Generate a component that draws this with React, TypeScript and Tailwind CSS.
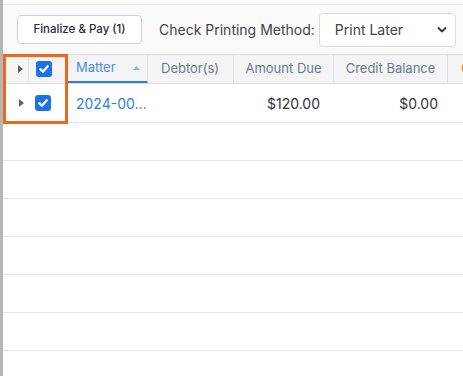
import React from "react";

const font = { fontFamily: "Inter, 'Noto Sans', sans-serif" };

function Check() {
  return (
    <div className="w-[16px] h-[16px] rounded-[3px] bg-[#1a73e8] flex items-center justify-center">
      <svg width="12" height="12" viewBox="0 0 12 12">
        <path d="M2.3 6.2 L4.9 8.7 L9.8 3.3" fill="none" stroke="white" strokeWidth="2.3" strokeLinecap="round" strokeLinejoin="round" />
      </svg>
    </div>
  );
}

function Tri() {
  return (
    <svg width="5" height="8" viewBox="0 0 5 8">
      <path d="M0 0 L5 4 L0 8 Z" fill="#5f6368" />
    </svg>
  );
}

export default function App() {
  const emptyRows = [0, 1, 2, 3, 4, 5, 6];
  return (
    <div className="w-[463px] h-[376px] flex overflow-hidden bg-white" style={font}>
      <div className="w-[3px] h-full bg-[#b5b5b5] shrink-0" />
      <div className="flex-1 flex flex-col relative min-w-0 overflow-hidden">
        <div className="h-[4px] bg-white shrink-0" />
        <div className="h-[50px] bg-[#fafafb] border-t border-[#e4e4e4] flex items-center pl-[14px] shrink-0">
          <button className="h-[29px] w-[125px] bg-white border border-[#cfd3dc] rounded-[4px] text-[11.5px] font-medium text-[#2a2840] flex items-center justify-center">
            Finalize &amp; Pay (1)
          </button>
          <span className="ml-[17px] text-[14px] text-[#444]">Check Printing Method:</span>
          <div className="ml-[4px] h-[34px] w-[137px] bg-white border border-[#dcdcdc] rounded-[4px] flex items-center justify-between pl-[15px] pr-[8px]">
            <span className="text-[14px] text-[#444]">Print Later</span>
            <svg width="10" height="7" viewBox="0 0 10 7">
              <path d="M1 1.5 L5 5.5 L9 1.5" fill="none" stroke="#333" strokeWidth="1.8" />
            </svg>
          </div>
        </div>
        {/* header */}
        <div className="h-[30px] flex bg-[#f4f4f5] border-t border-b border-[#dedede] shrink-0 text-[13px] text-[#6a7b92]">
          <div className="w-[26px] flex items-center justify-end pr-[5px] border-r border-[#e0e0e0]">
            <Tri />
          </div>
          <div className="w-[38px] flex items-center justify-start pl-[7px] border-r border-[#e0e0e0]">
            <Check />
          </div>
          <div className="w-[81px] flex items-center justify-between pl-[9px] pr-[7px] border-r border-[#e0e0e0] border-b-2 border-b-[#2a7de1] text-[#4a8ee0]">
            <span>Matter</span>
            <svg width="7" height="4" viewBox="0 0 7 4">
              <path d="M0 4 L3.5 0 L7 4 Z" fill="#8cb8ee" />
            </svg>
          </div>
          <div className="w-[86px] flex items-center pl-[13px] border-r border-[#e0e0e0]">Debtor(s)</div>
          <div className="w-[100px] flex items-center justify-center border-r border-[#e0e0e0]">Amount Due</div>
          <div className="w-[114px] flex items-center justify-center border-r border-[#e0e0e0]">Credit Balance</div>
          <div className="flex-1 flex items-center pl-[13px] text-[#e8873c] whitespace-nowrap overflow-hidden">Overpayment</div>
        </div>
        {/* data row */}
        <div className="h-[39px] flex border-b border-[#e6e6e6] shrink-0 text-[14px]">
          <div className="w-[26px] flex items-center justify-end pr-[5px]">
            <Tri />
          </div>
          <div className="w-[38px] flex items-center justify-start pl-[6px]">
            <Check />
          </div>
          <div className="w-[81px] flex items-center pl-[9px] text-[#2f7fe0] whitespace-nowrap">2024-00...</div>
          <div className="w-[86px]" />
          <div className="w-[100px] flex items-center justify-end pr-[14px] text-[#333]">$120.00</div>
          <div className="w-[114px] flex items-center justify-end pr-[10px] text-[#333]">$0.00</div>
          <div className="flex-1" />
        </div>
        {emptyRows.map((i) => (
          <div key={i} className="h-[38px] border-b border-[#e6e6e6] shrink-0" />
        ))}
        <div className="absolute left-0 top-[54px] w-[65px] h-[70px] border-[3px] border-[#f0661c] pointer-events-none" />
      </div>
    </div>
  );
}
